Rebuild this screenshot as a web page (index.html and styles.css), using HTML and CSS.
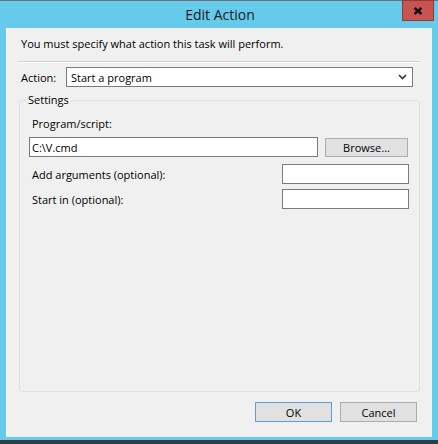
FILE: index.html
```html
<!DOCTYPE html>
<html lang="en">
  <head>
    <meta charset="UTF-8" />
    <title>Edit Action</title>
    <link rel="stylesheet" href="styles.css">
  </head>
  <body>
    <div class="window">
      <div class="title-bar">
        <span class="title">Edit Action</span>
        <button class="close-btn" type="button" aria-label="Close">
          <svg width="10" height="8" viewBox="0 0 10 8">
            <path d="M1.5 1 L8.5 7 M8.5 1 L1.5 7" stroke="#111" stroke-width="2.4" fill="none" />
          </svg>
        </button>
      </div>

      <div class="client">
        <p class="intro">You must specify what action this task will perform.</p>
        <div class="separator"></div>

        <div class="action-row">
          <label for="action">Action:</label>
          <div class="select-box" id="action">
            <span>Start a program</span>
            <svg width="9" height="6" viewBox="0 0 9 6">
              <path d="M1 1 L4.5 4.5 L8 1" stroke="#333" stroke-width="1.6" fill="none" />
            </svg>
          </div>
        </div>

        <fieldset class="settings">
          <legend>Settings</legend>
          <div class="settings-body">
            <label class="field-label" for="program">Program/script:</label>
            <div class="program-row">
              <input class="text-input program-input" type="text" id="program" value="C:\V.cmd" />
              <button class="win-btn browse-btn" type="button">Browse...</button>
            </div>
            <div class="option-row">
              <label for="args">Add arguments (optional):</label>
              <input class="text-input small-input" type="text" id="args" />
            </div>
            <div class="option-row">
              <label for="startin">Start in (optional):</label>
              <input class="text-input small-input" type="text" id="startin" />
            </div>
          </div>
        </fieldset>

        <div class="footer">
          <button class="win-btn ok-btn" type="button">OK</button>
          <button class="win-btn" type="button">Cancel</button>
        </div>
      </div>
    </div>
  </body>
</html>
```

FILE: styles.css
```css
* {
  box-sizing: border-box;
}
body {
  margin: 0;
  font-family: "Open Sans", "Noto Sans", sans-serif;
  font-size: 11px;
  color: #000;
}
.window {
  width: 438px;
  height: 444px;
  background-color: #66caeb;
  border-top: 1px solid #6b7378;
  border-bottom: 4px solid #2e3d46;
  display: flex;
  flex-direction: column;
}
.title-bar {
  position: relative;
  height: 27px;
  display: flex;
  justify-content: center;
  align-items: center;
}
.title {
  font-size: 14px;
  color: #1b1b1b;
  margin-left: 2px;
}
.close-btn {
  position: absolute;
  top: -1px;
  right: 4px;
  width: 32px;
  height: 21px;
  padding: 0;
  background-color: #c75450;
  border: 1px solid #8f3b38;
  display: flex;
  justify-content: center;
  align-items: center;
}
.client {
  flex: 1;
  margin: 0 6px 3px 6px;
  background-color: #f0f0f0;
  border-left: 1px solid #ffffff;
  padding: 8px 12px 15px 12px;
  display: flex;
  flex-direction: column;
}
.intro {
  margin: 0 0 0 2px;
  line-height: 16px;
}
.separator {
  margin: 9px 0 0 -1px;
  height: 2px;
  border-top: 1px solid #d2d2d2;
  border-bottom: 1px solid #ffffff;
}
.action-row {
  margin-top: 4px;
  display: flex;
  align-items: center;
  gap: 6px;
}
.action-row label {
  margin-left: 2px;
  width: 39px;
}
.select-box {
  width: 347px;
  height: 20px;
  background-color: #fff;
  border: 1px solid #7a7a7a;
  display: flex;
  justify-content: space-between;
  align-items: center;
  padding: 0 5px 0 4px;
}
.settings {
  flex: 1;
  margin: 5px 0 0 0;
  padding: 0;
  border: 1px solid #dce3e8;
  border-radius: 3px;
  min-inline-size: 0;
}
.settings legend {
  margin-left: 6px;
  padding: 0 2px;
  line-height: 16px;
}
.settings-body {
  padding: 8px 10px 0 9px;
  display: flex;
  flex-direction: column;
}
.field-label {
  margin-left: 3px;
  line-height: 16px;
}
.program-row {
  margin-top: 5px;
  display: flex;
  align-items: center;
  gap: 7px;
}
.text-input {
  height: 20px;
  background-color: #fff;
  border: 1px solid #7a7a7a;
  font-family: inherit;
  font-size: 11px;
  padding: 0 2px;
  margin: 0;
  outline: none;
}
.program-input {
  width: 289px;
}
.small-input {
  width: 127px;
}
.win-btn {
  height: 20px;
  background-color: #e1e1e1;
  border: 1px solid #adadad;
  font-family: inherit;
  font-size: 11px;
  color: #000;
  padding: 0;
  width: 77px;
}
.browse-btn {
  width: 83px;
  height: 19px;
}
.option-row {
  display: flex;
  justify-content: space-between;
  align-items: center;
  margin-top: 7px;
}
.option-row + .option-row {
  margin-top: 5px;
}
.option-row label {
  margin-left: 3px;
}
.footer {
  margin-top: 10px;
  display: flex;
  justify-content: flex-end;
  gap: 8px;
  padding-right: 3px;
}
.ok-btn {
  border-color: #5c9ed6;
}
```
